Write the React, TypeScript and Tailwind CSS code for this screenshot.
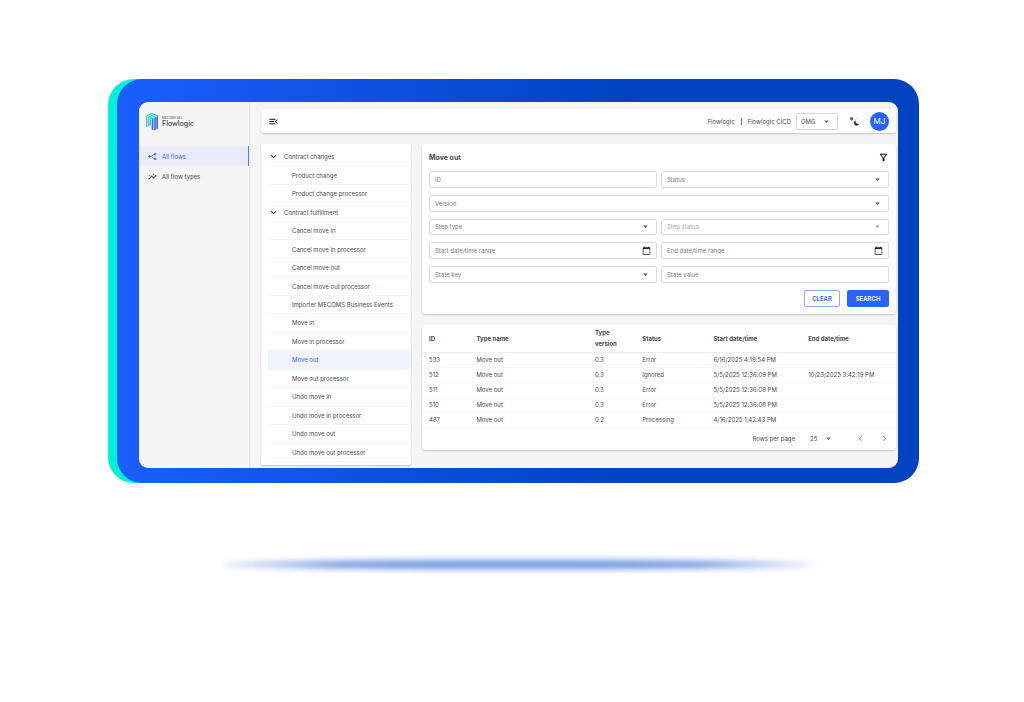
import type { ReactNode } from 'react';
import clsx from 'clsx';
import {
  MdArrowDropDown,
  MdCalendarToday,
  MdChevronLeft,
  MdChevronRight,
  MdExpandMore,
  MdInsights,
  MdMenuOpen,
  MdOutlineFilterAlt,
} from 'react-icons/md';

type TreeItem = { label: string; group?: boolean; active?: boolean };

const tree: TreeItem[] = [
  { label: 'Contract changes', group: true },
  { label: 'Product change' },
  { label: 'Product change processor' },
  { label: 'Contract fulfillment', group: true },
  { label: 'Cancel move in' },
  { label: 'Cancel move in processor' },
  { label: 'Cancel move out' },
  { label: 'Cancel move out processor' },
  { label: 'Importer MECOMS Business Events' },
  { label: 'Move in' },
  { label: 'Move in processor' },
  { label: 'Move out', active: true },
  { label: 'Move out processor' },
  { label: 'Undo move in' },
  { label: 'Undo move in processor' },
  { label: 'Undo move out' },
  { label: 'Undo move out processor' },
];

const rows = [
  ['533', 'Move out', '0.3', 'Error', '6/16/2025 4:19:54 PM', ''],
  ['512', 'Move out', '0.3', 'Ignored', '5/5/2025 12:36:09 PM', '10/23/2025 3:42:19 PM'],
  ['511', 'Move out', '0.3', 'Error', '5/5/2025 12:36:08 PM', ''],
  ['510', 'Move out', '0.3', 'Error', '5/5/2025 12:36:08 PM', ''],
  ['487', 'Move out', '0.2', 'Processing', '4/16/2025 1:42:43 PM', ''],
];

function Card({ className, children }: { className?: string; children: ReactNode }) {
  return (
    <div className={clsx('rounded-[3px] bg-white shadow-[0_1px_2px_rgba(0,0,0,0.2)]', className)}>
      {children}
    </div>
  );
}

function Logo() {
  return (
    <svg viewBox="0 0 36 54" className="h-[18px] w-3 shrink-0" aria-hidden="true">
      <defs>
        <linearGradient id="logo-teal" x1="0" y1="0" x2="0" y2="1">
          <stop offset="0" stopColor="#22d6c8" />
          <stop offset="1" stopColor="#35b4e4" />
        </linearGradient>
      </defs>
      <g fill="none" strokeWidth="3.6" strokeLinejoin="round">
        <path d="M2 42V9L16 2l18 6v8" stroke="url(#logo-teal)" />
        <path d="M8 40V12l9-4 11 4v4" stroke="url(#logo-teal)" />
        <path d="M13 38V14l8 3" stroke="url(#logo-teal)" />
        <path d="M19 50V17M24.5 52V15M29.5 50V13M34 47V11" stroke="#2f62df" />
      </g>
    </svg>
  );
}

function FlowIcon() {
  return (
    <svg viewBox="0 0 24 24" className="size-[9px] shrink-0" fill="none" stroke="currentColor" strokeWidth="2.5" aria-hidden="true">
      <path d="M2 12h8l6-6h2M10 12l6 6h2" />
      <circle cx="4" cy="12" r="2" fill="currentColor" />
      <path d="M17 4h4v4h-4zM17 16h4v4h-4z" />
    </svg>
  );
}

function ThemeIcon() {
  return (
    <svg viewBox="0 0 30 30" className="size-[10px]" aria-hidden="true">
      <path d="M3 28 28 2" stroke="#b5b5b5" strokeWidth="1.5" />
      <circle cx="8" cy="8" r="4.5" fill="#444" />
      <path d="M8 1v14M1 8h14M3 3l10 10M13 3 3 13" stroke="#777" strokeWidth="1.5" />
      <path d="M19 15a7 7 0 1 0 10 9c-6 2-11-3-10-9Z" fill="#2b2b2b" stroke="#2b2b2b" strokeWidth="2" />
    </svg>
  );
}

const fieldBox =
  'col-start-1 row-start-1 h-full w-full min-w-0 appearance-none rounded-[2px] border border-[#dadada] bg-transparent px-[5px] outline-none placeholder:text-[#777] placeholder:opacity-100';

function TextField({ label, calendar }: { label: string; calendar?: boolean }) {
  return (
    <div className="grid min-h-0 items-center">
      <input type="text" aria-label={label} placeholder={label} className={clsx(fieldBox, 'text-[#777]')} />
      {calendar && (
        <MdCalendarToday className="pointer-events-none col-start-1 row-start-1 mr-[6px] size-[9px] justify-self-end text-[#222]" />
      )}
    </div>
  );
}

function SelectField({ label, wide, disabled }: { label: string; wide?: boolean; disabled?: boolean }) {
  return (
    <div className={clsx('grid min-h-0 items-center', wide && 'col-span-2')}>
      <select
        aria-label={label}
        disabled={disabled}
        className={clsx(fieldBox, disabled ? 'text-[#a8a8a8] opacity-100' : 'text-[#777]')}
      >
        <option>{label}</option>
      </select>
      <MdArrowDropDown
        className={clsx(
          'pointer-events-none col-start-1 row-start-1 mr-[6px] size-[11px] justify-self-end',
          disabled ? 'text-[#999]' : 'text-[#555]',
        )}
      />
    </div>
  );
}

function Sidebar() {
  return (
    <aside className="flex w-[111px] shrink-0 flex-col border-r border-[#e8e8e8]">
      <div className="flex h-11 items-center gap-1 pb-1 pl-[7px]">
        <Logo />
        <div className="flex flex-col text-[#444]">
          <span className="text-[3px] leading-[3px]">MECOMS 365</span>
          <span className="text-[7px] leading-[8px] font-medium">Flowlogic</span>
        </div>
      </div>
      <nav className="flex flex-col">
        <a href="#flows" className="flex h-5 items-center gap-[5px] border-r border-[#5f7be6] bg-[#e9eafa] pl-[9px] text-[#3d6bf5]">
          <FlowIcon />
          All flows
        </a>
        <a href="#types" className="flex h-5 items-center gap-[5px] pl-[9px]">
          <MdInsights className="size-[9px] text-[#222]" />
          All flow types
        </a>
      </nav>
    </aside>
  );
}

function TopBar() {
  return (
    <Card className="flex h-6 shrink-0 items-center px-[7px]">
      <button type="button" aria-label="Collapse menu" className="text-[#111]">
        <MdMenuOpen className="size-[11px]" />
      </button>
      <div className="ml-auto flex items-center">
        <span>Flowlogic</span>
        <span className="mx-[6px] h-[7px] w-px bg-[#777]" />
        <span>Flowlogic CICD</span>
        <div className="ml-[5px] grid h-[17px] w-[42px] items-center">
          <select aria-label="Environment" className="col-start-1 row-start-1 h-full w-full appearance-none rounded-[2px] border border-[#d6d6d6] px-1 outline-none">
            <option>OMG</option>
          </select>
          <MdArrowDropDown className="pointer-events-none col-start-1 row-start-1 mr-[6px] size-[11px] justify-self-end text-[#666]" />
        </div>
        <button type="button" aria-label="Toggle theme" className="ml-[11px]">
          <ThemeIcon />
        </button>
        <button type="button" className="ml-[11px] flex size-[19px] items-center justify-center rounded-full bg-[#2962ff] text-[8px] text-white">
          MJ
        </button>
      </div>
    </Card>
  );
}

function FlowTree() {
  return (
    <Card className="flex w-[150px] shrink-0 flex-col pt-1 pb-[3px] pl-[7px]">
      {tree.map((item) => (
        <button
          key={item.label}
          type="button"
          className={clsx(
            'flex min-h-0 flex-1 items-center border-b text-left whitespace-nowrap',
            item.active ? 'border-[#f1f3fe] bg-[#f1f3fe] text-[#2962ff]' : 'border-[#f6f6f6]',
            !item.group && 'pl-6',
          )}
        >
          {item.group && <MdExpandMore className="mr-[5px] size-[11px] text-[#111]" />}
          {item.label}
        </button>
      ))}
    </Card>
  );
}

function FilterCard() {
  return (
    <Card className="flex flex-col px-[7px] pb-[7px]">
      <div className="flex h-[27px] items-center justify-between">
        <h1 className="text-[7px] font-bold">Move out</h1>
        <button type="button" aria-label="Filter" className="text-[#111]">
          <MdOutlineFilterAlt className="size-[11px]" />
        </button>
      </div>
      <form className="flex flex-col gap-[7px]" onSubmit={(e) => e.preventDefault()}>
        <div className="grid h-28 grid-cols-2 grid-rows-5 gap-x-1 gap-y-[7px]">
          <TextField label="ID" />
          <SelectField label="Status" />
          <SelectField label="Version" wide />
          <SelectField label="Step type" />
          <SelectField label="Step status" disabled />
          <TextField label="Start date/time range" calendar />
          <TextField label="End date/time range" calendar />
          <SelectField label="State key" />
          <TextField label="State value" />
        </div>
        <div className="flex justify-end gap-[7px] font-semibold">
          <button type="reset" className="h-[17px] w-9 rounded-[2px] border border-[#8fabfb] text-[#2962ff]">
            CLEAR
          </button>
          <button type="submit" className="h-[17px] w-[42px] rounded-[2px] bg-[#2962ff] text-white">
            SEARCH
          </button>
        </div>
      </form>
    </Card>
  );
}

function ResultsCard() {
  return (
    <Card>
      <table className="w-full table-fixed text-left">
        <thead>
          <tr className="h-[27px] border-b border-[#eeeeee] font-semibold">
            <th className="w-[10%] pl-[7px]">ID</th>
            <th className="w-[25%] pl-[7px]">Type name</th>
            <th className="w-[10%] pl-[7px] leading-[11px]">
              Type
              <br />
              version
            </th>
            <th className="w-[15%] pl-[7px]">Status</th>
            <th className="w-[20%] pl-[7px]">Start date/time</th>
            <th className="w-[20%] pl-[7px]">End date/time</th>
          </tr>
        </thead>
        <tbody>
          {rows.map((row) => (
            <tr key={row[0]} className="h-[15px] border-b border-[#f7f7f7]">
              {row.map((cell, i) => (
                <td key={i} className="pl-[7px] whitespace-nowrap">
                  {cell}
                </td>
              ))}
            </tr>
          ))}
        </tbody>
      </table>
      <div className="flex h-[22px] items-center justify-end pr-[6px]">
        <label htmlFor="page-size">Rows per page</label>
        <div className="ml-[11px] grid w-7 items-center">
          <select id="page-size" className="col-start-1 row-start-1 w-full appearance-none px-1 outline-none">
            <option>25</option>
          </select>
          <MdArrowDropDown className="pointer-events-none col-start-1 row-start-1 size-[11px] justify-self-end text-[#666]" />
        </div>
        <button type="button" aria-label="Previous page" className="ml-[21px] text-[#999]">
          <MdChevronLeft className="size-[11px]" />
        </button>
        <button type="button" aria-label="Next page" className="ml-[13px] text-[#999]">
          <MdChevronRight className="size-[11px]" />
        </button>
      </div>
    </Card>
  );
}

export default function App() {
  return (
    <div className="min-h-screen bg-white pt-[79px] pr-[105px] pl-[108px] font-['Inter',sans-serif] text-[6px] leading-[9px] text-[#484848]">
      <div className="rounded-l-[26px] rounded-r-[30px] bg-[#00f0d8] pl-[9px]">
        <div className="rounded-[25px] bg-linear-to-r from-[#1a5fff] to-[#0042c2] to-65% pt-[23px] pr-[21px] pb-[15px] pl-[22px]">
          <div className="flex overflow-hidden rounded-[9px] bg-[#f5f5f5]">
            <Sidebar />
            <main className="flex min-w-0 flex-1 flex-col gap-[11px] pt-[7px] pr-[2px] pb-[3px] pl-[11px]">
              <TopBar />
              <div className="flex min-h-[321px] gap-[11px]">
                <FlowTree />
                <div className="flex min-w-0 flex-1 flex-col gap-[11px]">
                  <FilterCard />
                  <ResultsCard />
                </div>
              </div>
            </main>
          </div>
        </div>
      </div>
      <div className="mt-[77px] mr-[105px] ml-[114px] h-[9px] rounded-[50%] bg-[linear-gradient(to_right,#6f95e060,#6f95e0_20%,#6f95e0_80%,#6f95e060)] blur-[3px]" />
    </div>
  );
}
